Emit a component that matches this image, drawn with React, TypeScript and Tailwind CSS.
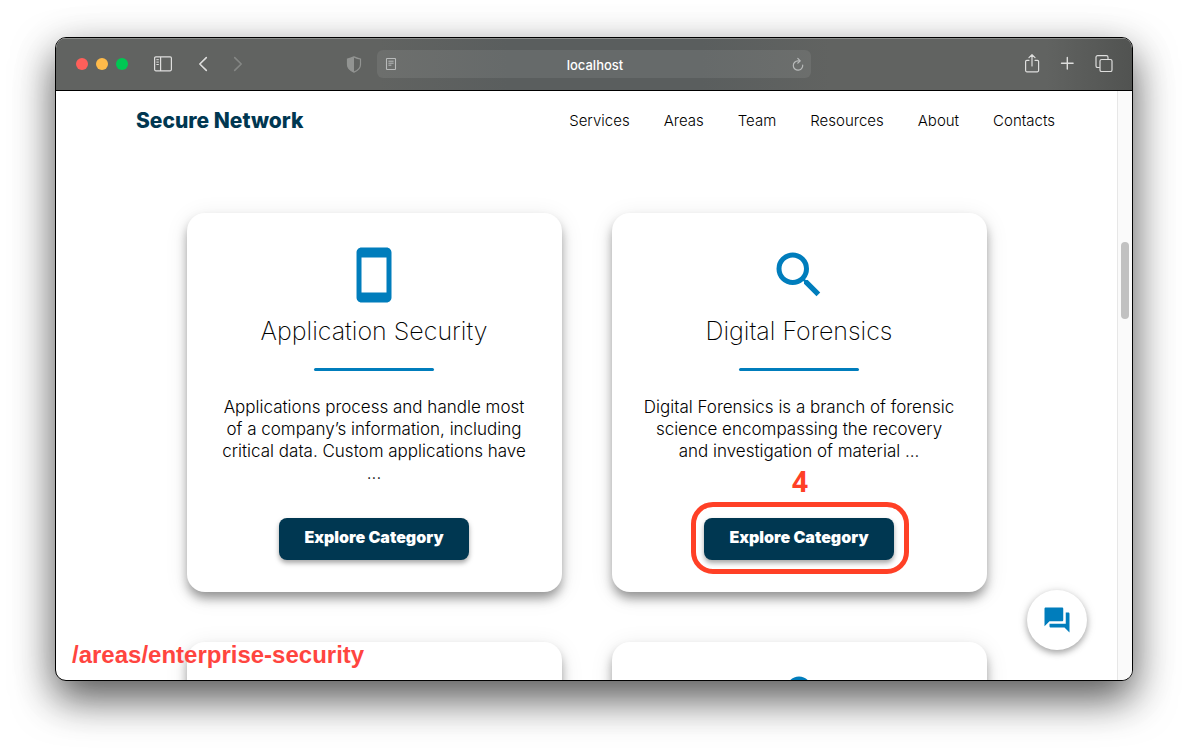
import type { ReactNode } from "react";
import type { IconType } from "react-icons";
import {
  MdBusiness,
  MdLock,
  MdQuestionAnswer,
  MdSearch,
  MdStayCurrentPortrait,
} from "react-icons/md";

type Area = {
  title: string;
  text: string;
  icon: IconType;
  marker?: string;
};

const links = ["Services", "Areas", "Team", "Resources", "About", "Contacts"];

const areas: Area[] = [
  {
    title: "Application Security",
    text: "Applications process and handle most of a company’s information, including critical data. Custom applications have ...",
    icon: MdStayCurrentPortrait,
  },
  {
    title: "Digital Forensics",
    text: "Digital Forensics is a branch of forensic science encompassing the recovery and investigation of material ...",
    icon: MdSearch,
    marker: "4",
  },
];

function ToolButton({ label, className, children }: { label: string; className?: string; children: ReactNode }) {
  return (
    <button type="button" aria-label={label} className={`flex shrink-0 items-center justify-center ${className ?? ""}`}>
      {children}
    </button>
  );
}

function Toolbar() {
  return (
    <div className="grid h-[53px] shrink-0 grid-cols-[1fr_434px_1fr] items-center border-b border-black bg-[linear-gradient(90deg,#616361_0%,#616361_30%,#5a5e5e_42%,#5a5e5e_60%,#616361_72%,#616361_92%,#515351_100%)] shadow-[inset_0_1px_0_#8b8d8b]">
      <div className="flex items-center pl-5 pr-[15px] text-[#dededd]">
        <div className="flex gap-2">
          <button type="button" aria-label="Close" className="size-3 rounded-full bg-[#ff5f5a]" />
          <button type="button" aria-label="Minimize" className="size-3 rounded-full bg-[#ffbb4a]" />
          <button type="button" aria-label="Zoom" className="size-3 rounded-full bg-[#00c853]" />
        </div>
        <ToolButton label="Show sidebar" className="ml-[25px]">
          <svg width="20" height="16" viewBox="0 0 20 16" fill="none" stroke="currentColor" strokeWidth="1.2">
            <rect x="1.6" y="0.8" width="16.8" height="14" rx="1.2" />
            <path d="M7.6 1v14" />
            <path d="M3.4 3.7h2.4M3.4 6.1h2.4M3.4 8.5h2.4" strokeWidth="1" />
          </svg>
        </ToolButton>
        <ToolButton label="Back" className="ml-[25px]">
          <svg width="10" height="16" viewBox="0 0 10 16" fill="none" stroke="currentColor" strokeWidth="1.6" strokeLinecap="round" strokeLinejoin="round">
            <path d="M8.3 1.6 1.8 8l6.5 6.4" />
          </svg>
        </ToolButton>
        <ToolButton label="Forward" className="ml-[25px] text-[#858785]">
          <svg width="10" height="16" viewBox="0 0 10 16" fill="none" stroke="currentColor" strokeWidth="1.6" strokeLinecap="round" strokeLinejoin="round">
            <path d="M1.7 1.6 8.2 8l-6.5 6.4" />
          </svg>
        </ToolButton>
        <ToolButton label="Privacy report" className="ml-auto text-[#929492]">
          <svg width="16" height="17" viewBox="0 0 16 17" fill="none" stroke="currentColor" strokeWidth="1.2">
            <path d="M8 .9C10.200 2 12.300 2.700 14.500 3v5.500c0 3.500-2.700 6-6.500 7.600-3.800-1.600-6.500-4.100-6.500-7.600V3C3.700 2.700 5.800 2 8 .9Z" />
            <path d="M8 .9v15.200c-3.800-1.600-6.500-4.100-6.500-7.600V3C3.700 2.700 5.800 2 8 .9Z" fill="currentColor" stroke="none" />
          </svg>
        </ToolButton>
      </div>

      <div className="flex h-7 items-center rounded-md bg-white/8 px-[7px] text-[#b9bbbb]">
        <ToolButton label="Reader">
          <svg width="14" height="14" viewBox="0 0 14 14" fill="none" stroke="currentColor" strokeWidth="1.1">
            <rect x="2.500" y="1.500" width="9" height="11" rx="0.600" />
            <path d="M4.400 4.200h5.200M4.400 6.200h5.200M4.400 8.200h3" strokeWidth="1" />
          </svg>
        </ToolButton>
        <input
          aria-label="Address"
          defaultValue="localhost"
          className="h-7 w-0 flex-1 bg-transparent pt-0.5 text-center font-['Inter',sans-serif] text-[13px] font-medium text-white outline-none"
        />
        <ToolButton label="Reload">
          <svg width="12" height="14" viewBox="0 0 12 14" fill="none" stroke="currentColor" strokeWidth="1.2" strokeLinecap="round" strokeLinejoin="round">
            <path d="M10.700 8.100A4.700 4.700 0 1 1 6 3.800h1.800" />
            <path d="M5.800 1.400 8.200 3.800 5.800 6.200" />
          </svg>
        </ToolButton>
      </div>

      <div className="flex items-center justify-end gap-4 pr-[18px] text-[#dededd]">
        <ToolButton label="Share" className="size-5">
          <svg width="18" height="20" viewBox="0 0 18 20" fill="none" stroke="currentColor" strokeWidth="1.2" strokeLinecap="round" strokeLinejoin="round">
            <path d="M6 6.300H3.800c-.7 0-1.200.5-1.200 1.200v9.100c0 .7.500 1.200 1.200 1.200h10.600c.7 0 1.200-.5 1.200-1.200V7.500c0-.7-.5-1.200-1.200-1.200H12" />
            <path d="M9 12V.900M6 3.700l3-3 3 3" />
          </svg>
        </ToolButton>
        <ToolButton label="New tab" className="size-5">
          <svg width="16" height="16" viewBox="0 0 16 16" fill="none" stroke="currentColor" strokeWidth="1.4" strokeLinecap="round">
            <path d="M7.300 1.500v11.600M1.500 7.300h11.600" />
          </svg>
        </ToolButton>
        <ToolButton label="Tab overview" className="size-5">
          <svg width="18" height="18" viewBox="0 0 18 18" fill="none" stroke="currentColor" strokeWidth="1.2">
            <rect x="5" y="4.500" width="12" height="12" rx="1.600" />
            <path d="M4.800 12.500H2.600C1.700 12.500 1 11.800 1 10.900V2.300C1 1.400 1.700.700 2.600.700h8.800c.9 0 1.600.7 1.600 1.600v2" />
          </svg>
        </ToolButton>
      </div>
    </div>
  );
}

const cardStyle = "rounded-[18px] bg-white shadow-[0_7px_11px_-1px_rgba(0,0,0,0.4),0_4px_24px_rgba(0,0,0,0.09)]";

function AreaCard({ title, text, icon: Icon, marker }: Area) {
  return (
    <article className={`flex min-h-[379px] flex-col items-center px-8 py-8 text-center ${cardStyle}`}>
      <Icon size={60} className="shrink-0 text-[#007dbc]" />
      <h2 className="mt-2.5 text-[25px] leading-8 font-extralight">{title}</h2>
      <hr className="mt-[21px] h-[3px] w-[120px] rounded-full border-0 bg-[#007dbc]" />
      <p className="mt-[25px] text-[17px] leading-[22px] font-light">{text}</p>
      <div className="relative mt-auto">
        <button
          type="button"
          className="h-[42px] w-[190px] rounded-lg bg-[#003751] pb-1 text-[16px] font-black text-white shadow-[0_3px_5px_rgba(0,0,0,0.35)]"
        >
          Explore Category
        </button>
        {marker && (
          <div className="pointer-events-none absolute -top-4 -right-[15px] -bottom-3.5 -left-[13px] rounded-[22px] border-5 border-[#ff4026]">
            <span className="absolute inset-x-0 -top-11 font-['Open_Sans',sans-serif] text-[28px] leading-9 font-bold text-[#ff4026]">
              {marker}
            </span>
          </div>
        )}
      </div>
    </article>
  );
}

function PeekCard({ icon: Icon }: { icon: IconType }) {
  return (
    <article className={`flex h-[379px] flex-col items-center py-8 ${cardStyle}`}>
      <Icon size={60} className="shrink-0 text-[#007dbc]" />
    </article>
  );
}

export default function App() {
  return (
    <div className="flex h-screen flex-col bg-white px-[55px] pt-[37px] pb-[73px] font-['Inter',sans-serif] text-black">
      <div className="flex min-h-0 flex-1 flex-col overflow-hidden rounded-[11px] border border-black bg-white shadow-[0_18px_40px_rgba(0,0,0,0.62),0_10px_50px_rgba(0,0,0,0.1)]">
        <Toolbar />
        <div className="relative flex min-h-0 flex-1">
          <main className="min-w-0 flex-1 overflow-hidden">
            <header className="flex h-[60px] items-center justify-between pr-[62px] pl-20">
              <a href="#home" className="text-[21px] font-extrabold text-[#003751]">
                Secure Network
              </a>
              <nav className="flex gap-[34px] text-[15px] font-light">
                {links.map((link) => (
                  <a key={link} href={`#${link.toLowerCase()}`}>
                    {link}
                  </a>
                ))}
              </nav>
            </header>
            <section className="mx-auto mt-[62px] grid max-w-[800px] grid-cols-2 gap-[50px]">
              {areas.map((area) => (
                <AreaCard key={area.title} {...area} />
              ))}
              <PeekCard icon={MdBusiness} />
              <PeekCard icon={MdLock} />
            </section>
          </main>
          <div className="w-[15px] shrink-0 border-l border-[#e7e7e7] bg-[#fafafa] px-[3px] pt-[151px]">
            <div className="h-[77px] w-2 rounded-full bg-[#c1c1c1]" />
          </div>
          <button
            type="button"
            aria-label="Open chat"
            className="absolute right-[45px] bottom-[30px] flex size-[60px] items-center justify-center rounded-full bg-white text-[#007dbc] shadow-[0_3px_6px_rgba(0,0,0,0.3),0_1px_12px_rgba(0,0,0,0.1)]"
          >
            <MdQuestionAnswer size={30} />
          </button>
          <p className="absolute bottom-[9px] left-4 font-['Liberation_Sans',sans-serif] text-[24px] leading-8 font-bold text-[#ff453f]">
            /areas/enterprise-security
          </p>
        </div>
      </div>
    </div>
  );
}
